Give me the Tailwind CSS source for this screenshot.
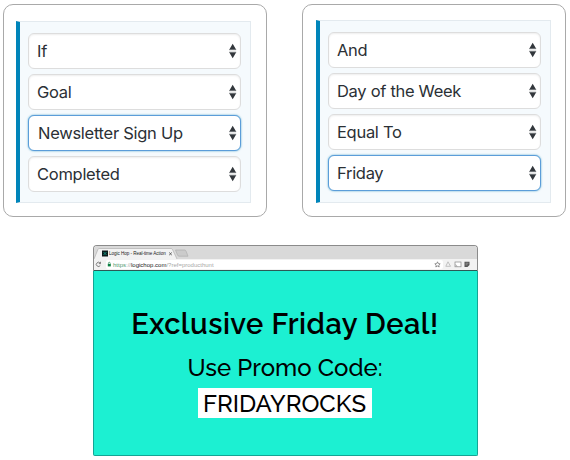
<!DOCTYPE html>
<html lang="en">
<head>
    <meta charset="UTF-8">
    <meta name="viewport" content="width=device-width, initial-scale=1.0">
    <title>Logic Hop - Friday Deal</title>
    <script src="https://cdn.jsdelivr.net/npm/@tailwindcss/browser@4"></script>
</head>
<body class="w-[570px] h-[460px] overflow-hidden bg-white font-['Inter',sans-serif] text-[#2b3035]">
    <svg class="hidden">
        <symbol id="arrows" viewBox="0 0 8 16">
            <path d="M3.7 0.8L7.2 6.8H0.2z M3.7 15.2L7.2 9.2H0.2z" fill="#32373c"/>
            <path d="M0.2 6.7h7M0.2 9.2h7" stroke="#777b7e" stroke-width="0.7"/>
        </symbol>
    </svg>

    <!-- Conditions -->
    <div class="flex gap-[35px] pl-[3px] pt-1">
        <section class="w-[264px] h-[213px] rounded-[10px] border border-[#a9a9a9] pl-3 pt-4">
            <div class="w-[235px] h-[182px] bg-[#f5fafd] border border-[#e3eaef] border-l-4 border-l-[#0085ba] pl-2 pt-[11px] flex flex-col gap-[5px] text-[16.5px] tracking-[-0.28px]">
                <div class="w-[213px] h-9 bg-white rounded-md border border-[#dddddd] shadow-[inset_0_1px_2px_#00000012] flex items-center justify-between pl-2 pr-[3px]">
                    <span>If</span>
                    <svg class="w-2 h-4"><use href="#arrows"/></svg>
                </div>
                <div class="w-[213px] h-9 bg-white rounded-md border border-[#dddddd] shadow-[inset_0_1px_2px_#00000012] flex items-center justify-between pl-2 pr-[3px]">
                    <span>Goal</span>
                    <svg class="w-2 h-4"><use href="#arrows"/></svg>
                </div>
                <div class="w-[213px] h-9 bg-white rounded-md border border-[#5b9dd9] shadow-[0_0_2px_#1e8cbecc] flex items-center justify-between pl-[9px] pr-[3px]">
                    <span>Newsletter Sign Up</span>
                    <svg class="w-2 h-4"><use href="#arrows"/></svg>
                </div>
                <div class="w-[213px] h-9 bg-white rounded-md border border-[#dddddd] shadow-[inset_0_1px_2px_#00000012] flex items-center justify-between pl-2 pr-[3px]">
                    <span>Completed</span>
                    <svg class="w-2 h-4"><use href="#arrows"/></svg>
                </div>
            </div>
        </section>

        <section class="w-[264px] h-[213px] rounded-[10px] border border-[#a9a9a9] pl-[13px] pt-[15px]">
            <div class="w-[235px] h-[183px] bg-[#f5fafd] border border-[#e3eaef] border-l-4 border-l-[#0085ba] pl-2 pt-[11px] flex flex-col gap-[5px] text-[16.5px] tracking-[-0.3px]">
                <div class="w-[213px] h-9 bg-white rounded-md border border-[#dddddd] shadow-[inset_0_1px_2px_#00000012] flex items-center justify-between pl-2 pr-[3px]">
                    <span>And</span>
                    <svg class="w-2 h-4"><use href="#arrows"/></svg>
                </div>
                <div class="w-[213px] h-9 bg-white rounded-md border border-[#dddddd] shadow-[inset_0_1px_2px_#00000012] flex items-center justify-between pl-2 pr-[3px]">
                    <span>Day of the Week</span>
                    <svg class="w-2 h-4"><use href="#arrows"/></svg>
                </div>
                <div class="w-[213px] h-9 bg-white rounded-md border border-[#dddddd] shadow-[inset_0_1px_2px_#00000012] flex items-center justify-between pl-2 pr-[3px]">
                    <span>Equal To</span>
                    <svg class="w-2 h-4"><use href="#arrows"/></svg>
                </div>
                <div class="w-[213px] h-9 bg-white rounded-md border border-[#5b9dd9] shadow-[0_0_2px_#1e8cbecc] flex items-center justify-between pl-2 pr-[3px]">
                    <span>Friday</span>
                    <svg class="w-2 h-4"><use href="#arrows"/></svg>
                </div>
            </div>
        </section>
    </div>

    <!-- Browser window -->
    <div class="ml-[93px] mt-7 w-[385px] h-[211px] flex flex-col font-['Liberation_Sans',sans-serif]">
        <div class="rounded-t-[4px] border border-b-0 border-[#8b8b8b] overflow-hidden">
            <div class="h-[13px] bg-[#d9d9d9] flex items-end">
                <div class="relative w-[92px] h-[11px]">
                    <svg class="absolute inset-0 w-[92px] h-[11px]" viewBox="0 0 92 11">
                        <path d="M0 11L4 1.2Q4.4 0.5 5.2 0.5H77Q78 0.5 78.5 1.5L83 11" fill="#f2f2f2" stroke="#b0b0b0" stroke-width="0.7"/>
                        <rect x="8" y="2.5" width="6" height="6" fill="#0b1a1a"/>
                        <path d="M9.5 4l3 3M12.5 4l-3 3" stroke="#15a58f" stroke-width="0.8"/>
                        <path d="M75.2 4.5l2.6 2.6M77.8 4.5l-2.6 2.6" stroke="#444" stroke-width="0.8"/>
                    </svg>
                    <span class="absolute left-[15px] top-[2px] whitespace-nowrap text-[4.6px] leading-[7px] tracking-[-0.05px] text-[#222]">Logic Hop - Real-time Action</span>
                </div>
                <svg class="w-[14px] h-[11px] -ml-[11px]" viewBox="0 0 14 11">
                    <path d="M0.5 2H9.5Q10.5 2 11 3L13 8.2H4Q3 8.2 2.5 7z" fill="#cbcbcb" stroke="#aaa" stroke-width="0.6"/>
                </svg>
            </div>
            <div class="h-[12px] bg-[#f2f2f2] border-b border-[#2c5a55] flex items-center">
                <svg class="w-3 h-[9px]" viewBox="0 0 12 9">
                    <path d="M6.2 3.2A2.1 2.1 0 1 0 6.3 5.4M6.5 1.8V3.6H4.8" fill="none" stroke="#666" stroke-width="0.8"/>
                </svg>
                <div class="w-[337px] h-[9px] bg-white rounded-[2px] flex items-center pl-[1px]">
                    <svg class="w-[6px] h-[7px]" viewBox="0 0 6 7">
                        <rect x="0.8" y="3" width="3" height="2.4" fill="#0b8043"/>
                        <path d="M1.4 3V2.2a0.9 0.9 0 0 1 1.8 0V3" fill="none" stroke="#0b8043" stroke-width="0.6"/>
                    </svg>
                    <span class="text-[6px] leading-[8px] text-[#a8a8a8] whitespace-nowrap"><span class="text-[#4f9c73]">https</span>://<span class="text-[#222]">logichop.com</span>/?ref=producthunt</span>
                    <svg class="w-[7px] h-[7px] ml-auto mr-[2px]" viewBox="0 0 7 7">
                        <path d="M3.5 0.8l0.8 1.8 1.9 0.2-1.4 1.3 0.4 1.9-1.7-1-1.7 1 0.4-1.9L0.8 2.8l1.9-0.2z" fill="none" stroke="#555" stroke-width="0.6"/>
                    </svg>
                </div>
                <svg class="w-[34px] h-[9px]" viewBox="0 0 34 9">
                    <path d="M5 1.8L7.5 6.3H2.8z" fill="none" stroke="#bbb" stroke-width="0.9"/>
                    <rect x="12" y="2" width="6" height="4.8" fill="#fff" stroke="#888" stroke-width="0.7"/>
                    <path d="M12 4.8a2 2 0 0 1 2 2" fill="none" stroke="#888" stroke-width="0.6"/>
                    <path d="M21.5 1.8h5v3.2l-2 2h-3z" fill="#555"/>
                    <path d="M22.5 3.2h3M22.5 4.8h2" stroke="#ccc" stroke-width="0.5"/>
                </svg>
            </div>
        </div>
        <div class="grow rounded-b-[2px] border border-t-0 border-[#14a595] bg-[#1cf0d2] flex flex-col items-center text-black font-['Raleway','Lato',sans-serif] whitespace-nowrap">
            <h1 class="mt-[35px] mr-[1px] text-[29px] leading-9 font-semibold tracking-[0.47px]">Exclusive Friday Deal!</h1>
            <p class="mt-[10px] mr-[1px] text-[24px] leading-8 font-medium">Use Promo Code:</p>
            <p class="mt-[4px] mr-[2px] w-[174px] h-[30px] bg-white text-center text-[24px] leading-[31px] font-medium">FRIDAYROCKS</p>
        </div>
    </div>
</body>
</html>
